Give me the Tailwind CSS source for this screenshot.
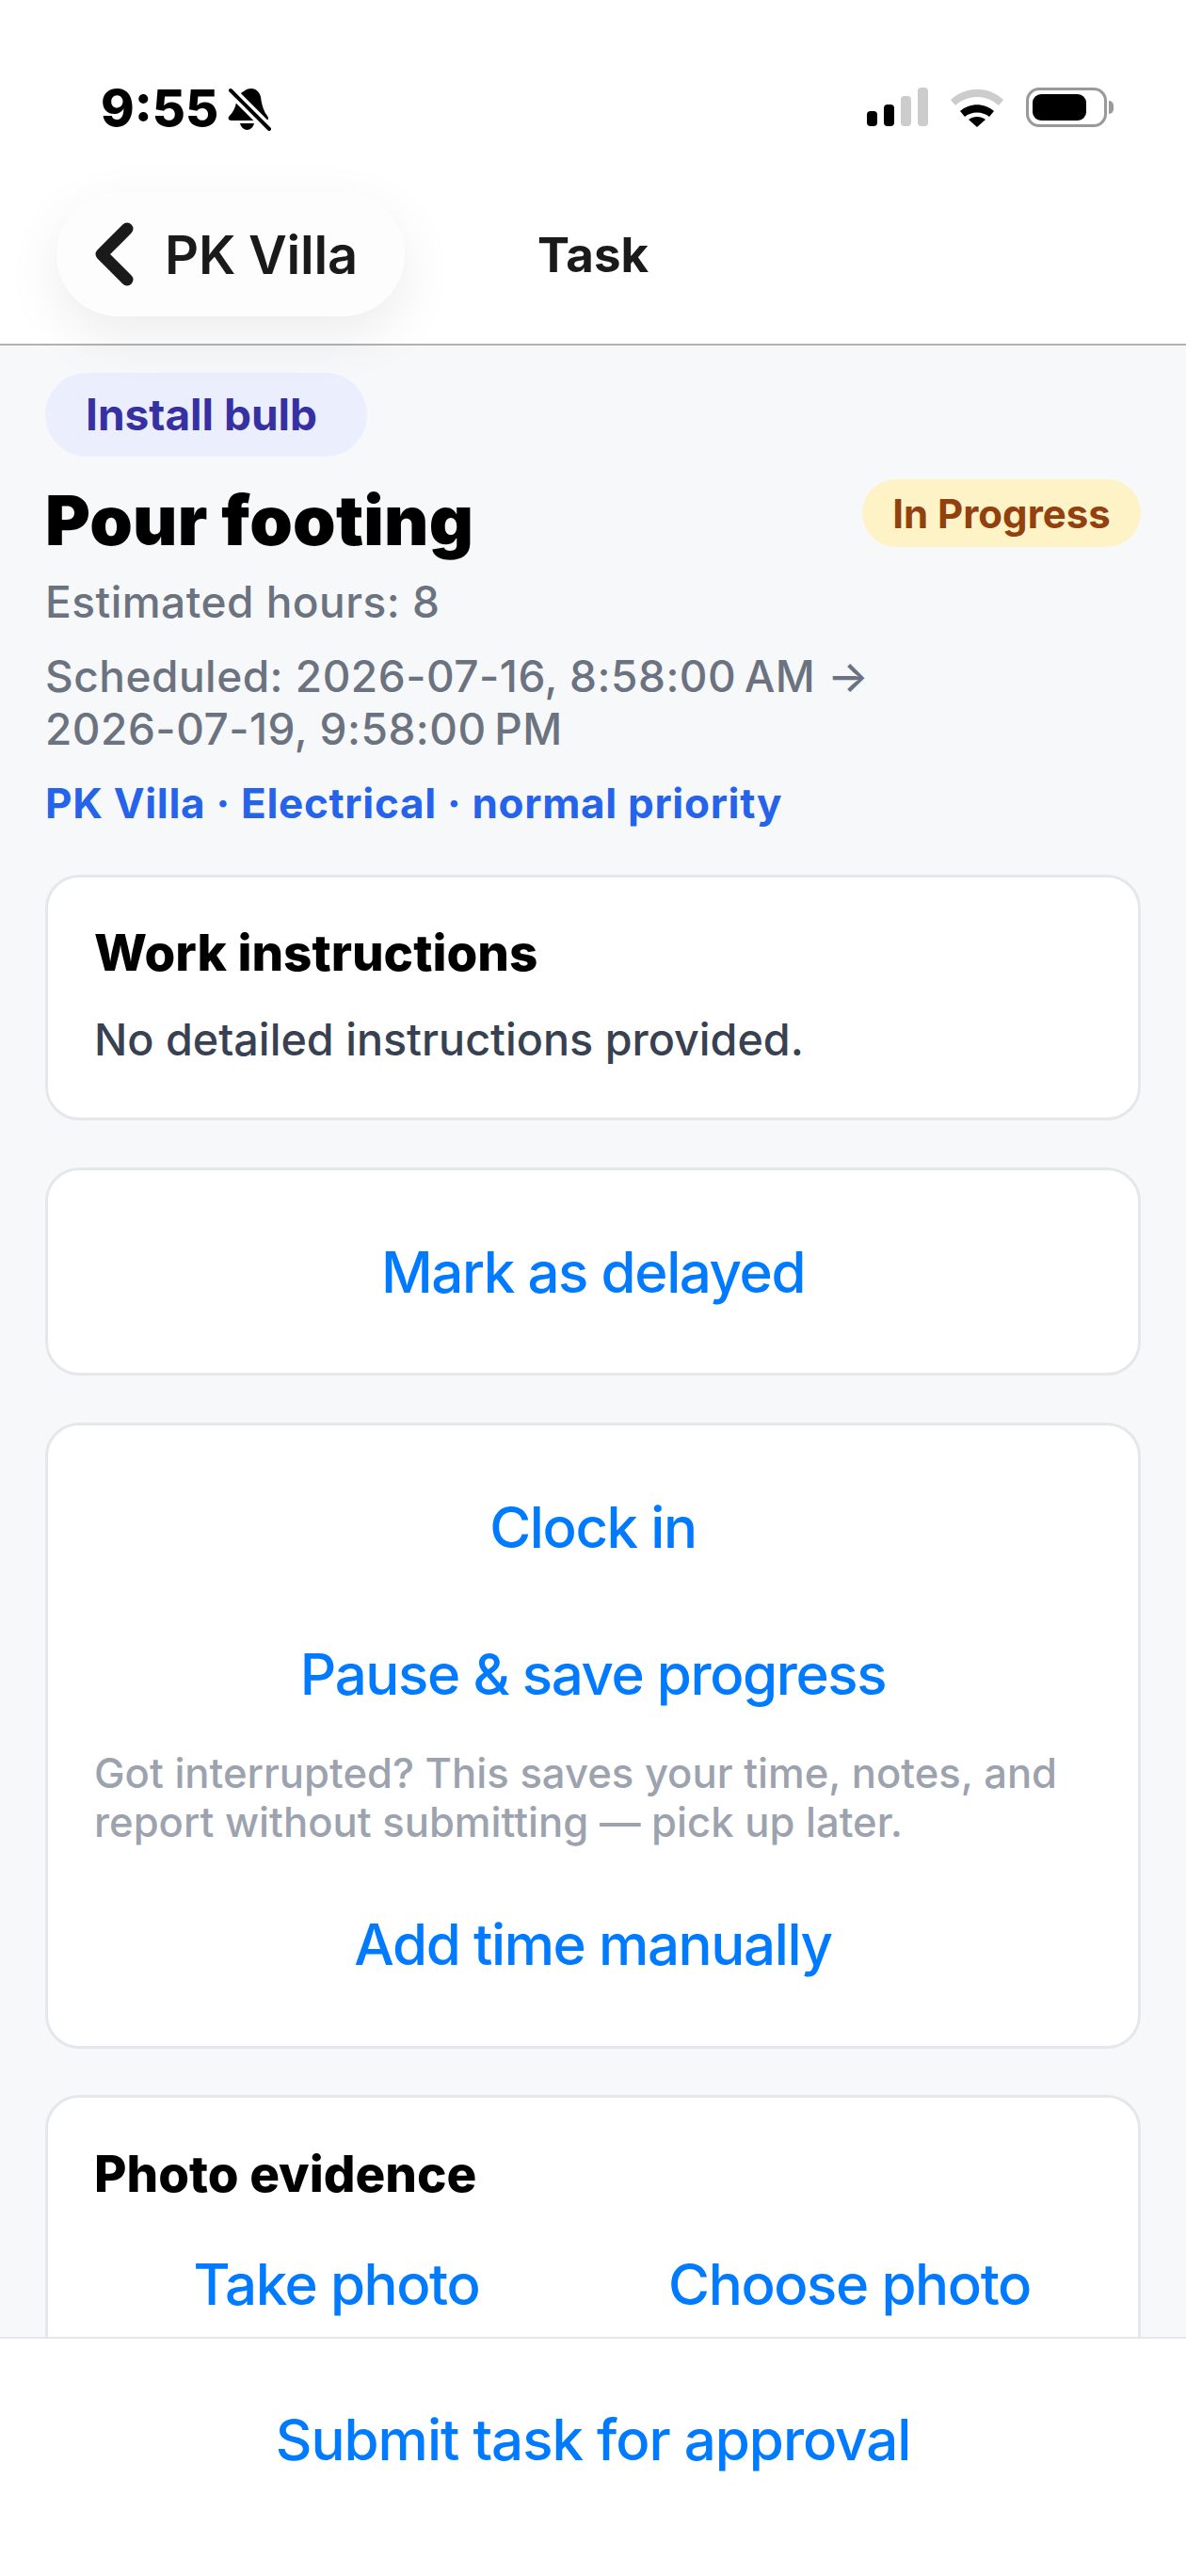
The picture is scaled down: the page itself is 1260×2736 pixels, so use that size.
<!doctype html>
<html>

<head>
    <meta charset="UTF-8">
    <meta name="viewport" content="width=device-width, initial-scale=1.0">
    <title>Task</title>
    <script src="https://cdn.jsdelivr.net/npm/@tailwindcss/browser@4"></script>
</head>

<body class="bg-white">
    <div class="relative w-[1260px] h-[2736px] overflow-hidden bg-[#f7f8fa] font-['Inter',sans-serif]">

        <!-- status bar + nav -->
        <header class="bg-white h-[367px] border-b-[2px] border-[#b3b3b3]">
            <div class="h-[204px] flex justify-between pl-[107px] pr-[77px] pt-[85px]">
                <div class="flex items-start gap-[10px]">
                    <span class="text-[54px] leading-[60px] font-extrabold text-black">9:55</span>
                    <svg class="mt-[8px]" width="46" height="46" viewBox="0 0 46 46">
                        <path d="M25 1c5 0 9 4 10 9 1 8 3 15 7 20 2 3 1 5-2 5H4c-3 0-4-2-3-4 4-4 7-9 8-15 1-6 4-10 8-12 2-2 5-3 8-3z" fill="#000" />
                        <path d="M13 38h15c-1 4-4 7-7.500 7S14 42 13 38z" fill="#000" />
                        <path d="M0 0 46 46" stroke="#fff" stroke-width="11" />
                        <path d="M3 3 44 44" stroke="#000" stroke-width="4" stroke-linecap="round" />
                    </svg>
                </div>
                <div class="flex items-start pt-[8px]">
                    <svg width="66" height="42" viewBox="0 0 66 42">
                        <rect x="0" y="25" width="11" height="16" rx="4" fill="#000" />
                        <rect x="18" y="18" width="11" height="23" rx="4" fill="#000" />
                        <rect x="36" y="9" width="11" height="32" rx="4" fill="#ccc" />
                        <rect x="54" y="0" width="11" height="41" rx="4" fill="#ccc" />
                    </svg>
                    <svg class="ml-[22px]" width="58" height="42" viewBox="0 0 58 42">
                        <path d="M1 13C17-2 41-2 57 13l-5 6C39 7 19 7 6 19z" fill="#ccc" />
                        <path d="M11 25c10-9 26-9 36 0l-5 6c-7-6-19-6-26 0z" fill="#000" />
                        <path d="M20 34c5-4 13-4 18 0L29 42z" fill="#000" />
                    </svg>
                    <div class="ml-[23px] w-[86px] h-[42px] rounded-[14px] border-[3px] border-[#999] bg-white p-[4px]">
                        <div class="w-[57px] h-[28px] rounded-[9px] bg-black"></div>
                    </div>
                    <div class="ml-[2px] mt-[14px] w-[5px] h-[14px] rounded-r-full bg-[#999]"></div>
                </div>
            </div>
            <div class="grid grid-cols-[1fr_auto_1fr] items-center">
                <div class="flex pl-[60px]">
                    <a class="relative z-10 flex items-center h-[132px] w-[370px] rounded-[66px] bg-[#fdfdfd] shadow-[0_20px_60px_rgba(0,0,0,0.08)] pl-[40px]">
                        <svg width="42" height="68" viewBox="0 0 42 68">
                            <path d="M35 7 8 34l27 27" fill="none" stroke="#1a1a1a" stroke-width="13" stroke-linecap="round" stroke-linejoin="round" />
                        </svg>
                        <span class="ml-[33px] mt-[2px] text-[56px] leading-[64px] font-semibold tracking-[-0.2px] text-[#1a1a1a]">PK Villa</span>
                    </a>
                </div>
                <h1 class="mt-[2px] text-[51px] leading-[64px] font-bold text-[#1a1a1a]">Task</h1>
                <div></div>
            </div>
        </header>

        <main class="px-[48px] pt-[29px]">
            <span class="inline-flex items-center h-[89px] w-[342px] pl-[43px] rounded-full bg-[#ebeefc] text-[46px] font-bold text-[#3730a3]">Install bulb</span>

            <div class="flex items-start justify-between mt-[26px]">
                <h2 class="text-[73px] leading-[84px] font-black tracking-[0.2px] text-black">Pour footing</h2>
                <span class="-mt-[2px] inline-flex items-center justify-center h-[72px] w-[296px] rounded-full bg-[#fef3c7] text-[42px] font-bold text-[#92400e]">In Progress</span>
            </div>

            <p class="mt-[16px] text-[46px] leading-[56px] font-medium tracking-[0.5px] text-[#6b7280]">Estimated hours: 8</p>
            <p class="mt-[23px] text-[46px] leading-[56px] font-medium tracking-[0.5px] text-[#6b7280] w-[960px]">Scheduled: 2026-07-16, 8:58:00&#8239;AM → 2026-07-19, 9:58:00&#8239;PM</p>
            <p class="mt-[23px] text-[44px] leading-[56px] font-bold tracking-[0.7px] text-[#2563eb]">PK Villa · Electrical · normal priority</p>

            <section class="mt-[48px] bg-white border-[3px] border-[#e5e7eb] rounded-[36px] px-[49px] pt-[48px] pb-[51px]">
                <h3 class="text-[53px] leading-[64px] font-extrabold text-black">Work instructions</h3>
                <p class="mt-[28px] text-[46.700px] leading-[64px] font-medium text-[#374151]">No detailed instructions provided.</p>
            </section>

            <section class="mt-[50px] bg-white border-[3px] border-[#e5e7eb] rounded-[36px] h-[221px] flex items-center justify-center">
                <button class="text-[60px] font-medium tracking-[-1.4px] text-[#007aff]">Mark as delayed</button>
            </section>

            <section class="mt-[50px] bg-white border-[3px] border-[#e5e7eb] rounded-[36px] px-[49px] pt-[48px] h-[665px] flex flex-col">
                <button class="h-[120px] text-[60px] font-medium tracking-[-1.4px] text-[#007aff]">Clock in</button>
                <button class="mt-[36px] h-[120px] text-[60px] font-medium tracking-[-1.4px] text-[#007aff]">Pause &amp; save progress</button>
                <p class="mt-[20px] text-[43.600px] leading-[52px] font-medium text-[#9ca3af]">Got interrupted? This saves your time, notes, and report without submitting — pick up later.</p>
                <button class="mt-[43px] h-[120px] text-[60px] font-medium tracking-[-1.4px] text-[#007aff]">Add time manually</button>
            </section>

            <section class="mt-[49px] bg-white border-[3px] border-[#e5e7eb] rounded-[36px] px-[49px] pt-[49px] h-[400px]">
                <h3 class="text-[53px] leading-[64px] font-extrabold text-black">Photo evidence</h3>
                <div class="mt-[25px] grid grid-cols-2 gap-[30px]">
                    <button class="h-[120px] text-[60px] font-medium tracking-[-1.4px] text-[#007aff]">Take photo</button>
                    <button class="h-[120px] text-[60px] font-medium tracking-[-1.4px] text-[#007aff]">Choose photo</button>
                </div>
            </section>
        </main>

        <!-- fixed footer over the scrolling content -->
        <footer class="absolute bottom-0 left-0 right-0 h-[254px] bg-white border-t-[2px] border-[#e5e7eb] flex justify-center pt-[47px]">
            <button class="h-[120px] text-[60px] font-medium tracking-[-1px] text-[#007aff]">Submit task for approval</button>
        </footer>
    </div>
</body>

</html>
